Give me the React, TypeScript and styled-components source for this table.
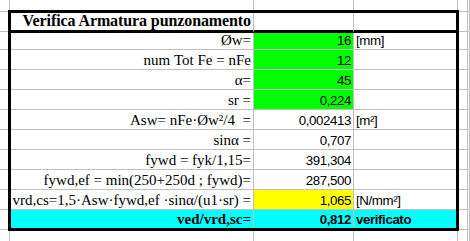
import React from "react";
import styled, { createGlobalStyle } from "styled-components";

const GlobalStyle = createGlobalStyle`
  html, body { margin: 0; padding: 0; background: #ffffff; }
  * { box-sizing: border-box; }
`;

const GRID = "#c0c0c0";

const Sheet = styled.div`
  display: grid;
  grid-template-columns: 10px 244px 100px 104px 10px 1fr;
  grid-template-rows: 12px 20px 18px repeat(9, 20px) 20px;
  width: 470px;
  height: 241px;
  overflow: hidden;
  background: #ffffff;
`;

const EmptyCell = styled.div`
  border-right: 1px solid ${GRID};
  border-bottom: 1px solid ${GRID};
`;

const Box = styled.div`
  grid-column: 2 / 5;
  grid-row: 2 / 13;
  margin: -2px -1px -1px -2px;
  border: 3px solid #000000;
  display: grid;
  grid-template-columns: 243px 100px 102px;
  grid-template-rows: 20px 17px repeat(8, 20px) 18px;
  background: #ffffff;
  position: relative;
  z-index: 1;
`;

type CellProps = {
  $fill?: string;
  $last?: boolean;
  $header?: boolean;
  $bottom?: boolean;
};

const Cell = styled.div<CellProps>`
  display: flex;
  align-items: flex-end;
  min-width: 0;
  overflow: visible;
  white-space: nowrap;
  background: ${(p) => p.$fill || "transparent"};
  border-right: ${(p) => (p.$last ? "none" : `1px solid ${GRID}`)};
  border-bottom: ${(p) =>
    p.$header ? "3px solid #000000" : p.$bottom ? "none" : `1px solid ${GRID}`};
`;

const LabelCell = styled(Cell)`
  justify-content: flex-end;
  padding-right: 2px;
`;

const ValueCell = styled(Cell)`
  justify-content: flex-end;
  padding-right: 2px;
`;

const UnitCell = styled(Cell)`
  justify-content: flex-start;
  padding-left: 2px;
`;

const SerifText = styled.span<{ $bold?: boolean }>`
  font-family: "Liberation Serif", "Times New Roman", serif;
  font-size: 15px;
  line-height: 15px;
  font-weight: ${(p) => (p.$bold ? 700 : 400)};
  color: #000000;
  margin-bottom: 1px;
`;

const TitleText = styled(SerifText)`
  font-size: 16px;
  letter-spacing: -0.1px;
  line-height: 16px;
`;

const SansText = styled.span<{ $bold?: boolean }>`
  font-family: "Liberation Sans", Arial, sans-serif;
  font-size: 13.3px;
  letter-spacing: -0.4px;
  line-height: 14px;
  font-weight: ${(p) => (p.$bold ? 700 : 400)};
  color: #000000;
  margin-bottom: 1px;
`;

type Row = {
  label: string;
  value: string;
  unit?: string;
  valueFill?: string;
  rowFill?: string;
  bold?: boolean;
};

const rows: Row[] = [
  { label: "Øw=", value: "16", unit: "[mm]", valueFill: "#00ff00" },
  { label: "num Tot Fe = nFe", value: "12", valueFill: "#00ff00" },
  { label: "α=", value: "45", valueFill: "#00ff00" },
  { label: "sr =", value: "0,224", valueFill: "#00ff00" },
  { label: "Asw= nFe·Øw²/4  =", value: "0,002413", unit: "[m²]" },
  { label: "sinα =", value: "0,707" },
  { label: "fywd = fyk/1,15=", value: "391,304" },
  { label: "fywd,ef = min(250+250d ; fywd)=", value: "287,500" },
  {
    label: "vrd,cs=1,5·Asw·fywd,ef ·sinα/(u1·sr) =",
    value: "1,065",
    unit: "[N/mm²]",
    valueFill: "#ffff00",
  },
  {
    label: "ved/vrd,sc=",
    value: "0,812",
    unit: "verificato",
    rowFill: "#00ffff",
    bold: true,
  },
];

// background spreadsheet cells around the table (13 rows x 6 cols minus the box area)
const backgroundCells = (() => {
  const list: number[] = [];
  for (let r = 0; r < 13; r++) {
    for (let c = 0; c < 6; c++) {
      const inBox = r >= 1 && r <= 11 && c >= 1 && c <= 3;
      if (!inBox) list.push(r * 6 + c);
    }
  }
  return list;
})();

export default function App() {
  return (
    <>
      <GlobalStyle />
      <Sheet>
        <Box>
          <LabelCell $header>
            <TitleText $bold>Verifica Armatura punzonamento</TitleText>
          </LabelCell>
          <ValueCell $header />
          <UnitCell $header $last />
          {rows.map((r, i) => {
            const bottom = i === rows.length - 1;
            return (
              <React.Fragment key={r.label}>
                <LabelCell $fill={r.rowFill} $bottom={bottom}>
                  <SerifText $bold={r.bold}>{r.label.replace(/ /g, "\u00a0")}</SerifText>
                </LabelCell>
                <ValueCell $fill={r.valueFill || r.rowFill} $bottom={bottom}>
                  <SansText $bold={r.bold}>{r.value}</SansText>
                </ValueCell>
                <UnitCell $fill={r.rowFill} $bottom={bottom} $last>
                  {r.unit ? <SansText $bold={r.bold}>{r.unit}</SansText> : null}
                </UnitCell>
              </React.Fragment>
            );
          })}
        </Box>
        {backgroundCells.map((k) => (
          <EmptyCell key={k} />
        ))}
      </Sheet>
    </>
  );
}
